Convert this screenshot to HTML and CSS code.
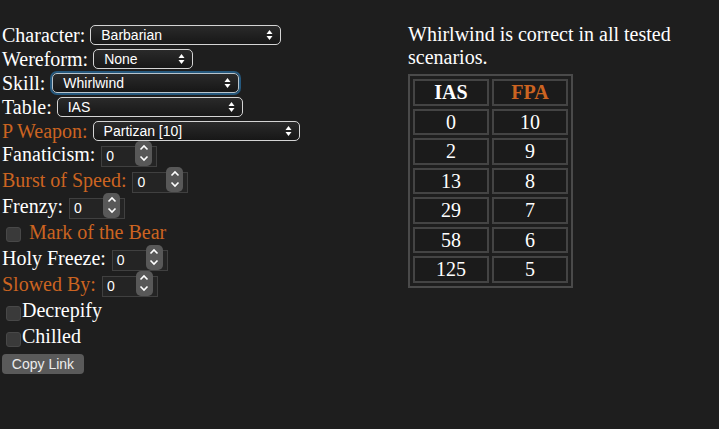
FILE: index.html
```html
<!DOCTYPE html>
<html>
<head>
<meta charset="utf-8">
<link rel="stylesheet" href="styles.css">
</head>
<body>
<div class="page">
  <div class="controls">
    <div class="row row-sel"><span>Character:</span><span class="sel w-char"><span>Barbarian</span><svg class="arr" width="7" height="12" viewBox="0 0 7 12"><polygon points="0.5,5 3.5,1 6.5,5" fill="#fff"/><polygon points="0.5,7 3.5,11 6.5,7" fill="#fff"/></svg></span></div>
    <div class="row row-sel"><span>Wereform:</span><span class="sel w-were"><span>None</span><svg class="arr" width="7" height="12" viewBox="0 0 7 12"><polygon points="0.5,5 3.5,1 6.5,5" fill="#fff"/><polygon points="0.5,7 3.5,11 6.5,7" fill="#fff"/></svg></span></div>
    <div class="row row-sel"><span>Skill:</span><span class="sel w-skill focus"><span>Whirlwind</span><svg class="arr" width="7" height="12" viewBox="0 0 7 12"><polygon points="0.5,5 3.5,1 6.5,5" fill="#fff"/><polygon points="0.5,7 3.5,11 6.5,7" fill="#fff"/></svg></span></div>
    <div class="row row-sel"><span>Table:</span><span class="sel w-table"><span>IAS</span><svg class="arr" width="7" height="12" viewBox="0 0 7 12"><polygon points="0.5,5 3.5,1 6.5,5" fill="#fff"/><polygon points="0.5,7 3.5,11 6.5,7" fill="#fff"/></svg></span></div>
    <div class="row row-sel"><span class="orange">P Weapon:</span><span class="sel w-weap"><span>Partizan [10]</span><svg class="arr" width="7" height="12" viewBox="0 0 7 12"><polygon points="0.5,5 3.5,1 6.5,5" fill="#fff"/><polygon points="0.5,7 3.5,11 6.5,7" fill="#fff"/></svg></span></div>

    <div class="row row-num"><span class="lbl">Fanaticism:</span><span class="num"><span class="num-val">0</span><span class="spin"><svg width="10" height="7" viewBox="0 0 10 7"><polyline points="1.5,5.5 5,2 8.5,5.5" fill="none" stroke="#fff" stroke-width="1.6"/></svg><svg width="10" height="7" viewBox="0 0 10 7"><polyline points="1.5,1.5 5,5 8.5,1.5" fill="none" stroke="#fff" stroke-width="1.6"/></svg></span></span></div>
    <div class="row row-num"><span class="lbl orange">Burst of Speed:</span><span class="num"><span class="num-val">0</span><span class="spin"><svg width="10" height="7" viewBox="0 0 10 7"><polyline points="1.5,5.5 5,2 8.5,5.5" fill="none" stroke="#fff" stroke-width="1.6"/></svg><svg width="10" height="7" viewBox="0 0 10 7"><polyline points="1.5,1.5 5,5 8.5,1.5" fill="none" stroke="#fff" stroke-width="1.6"/></svg></span></span></div>
    <div class="row row-num"><span class="lbl">Frenzy:</span><span class="num"><span class="num-val">0</span><span class="spin"><svg width="10" height="7" viewBox="0 0 10 7"><polyline points="1.5,5.5 5,2 8.5,5.5" fill="none" stroke="#fff" stroke-width="1.6"/></svg><svg width="10" height="7" viewBox="0 0 10 7"><polyline points="1.5,1.5 5,5 8.5,1.5" fill="none" stroke="#fff" stroke-width="1.6"/></svg></span></span></div>
    <div class="row row-chk"><span class="chk chk-wide"></span><span class="lbl orange">Mark of the Bear</span></div>
    <div class="row row-num"><span class="lbl">Holy Freeze:</span><span class="num"><span class="num-val">0</span><span class="spin"><svg width="10" height="7" viewBox="0 0 10 7"><polyline points="1.5,5.5 5,2 8.5,5.5" fill="none" stroke="#fff" stroke-width="1.6"/></svg><svg width="10" height="7" viewBox="0 0 10 7"><polyline points="1.5,1.5 5,5 8.5,1.5" fill="none" stroke="#fff" stroke-width="1.6"/></svg></span></span></div>
    <div class="row row-num"><span class="lbl orange">Slowed By:</span><span class="num"><span class="num-val">0</span><span class="spin"><svg width="10" height="7" viewBox="0 0 10 7"><polyline points="1.5,5.5 5,2 8.5,5.5" fill="none" stroke="#fff" stroke-width="1.6"/></svg><svg width="10" height="7" viewBox="0 0 10 7"><polyline points="1.5,1.5 5,5 8.5,1.5" fill="none" stroke="#fff" stroke-width="1.6"/></svg></span></span></div>
    <div class="row row-chk2"><span class="chk chk-tight"></span><span class="lbl">Decrepify</span></div>
    <div class="row row-chk3"><span class="chk chk-tight"></span><span class="lbl">Chilled</span></div>
    <div class="btn-row"><span class="btn">Copy Link</span></div>
  </div>
  <div class="result">
    <div class="msg">Whirlwind is correct in all tested scenarios.</div>
    <table class="tbl">
      <tr><th>IAS</th><th class="orange">FPA</th></tr>
      <tr><td>0</td><td>10</td></tr>
      <tr><td>2</td><td>9</td></tr>
      <tr><td>13</td><td>8</td></tr>
      <tr><td>29</td><td>7</td></tr>
      <tr><td>58</td><td>6</td></tr>
      <tr><td>125</td><td>5</td></tr>
    </table>
  </div>
</div>
</body>
</html>
```
FILE: styles.css
```css
body {
  margin: 0;
  padding: 23px 0 0 2px;
  background: #1e1e1e;
  color: #fff;
  font-family: "Liberation Serif", "Times New Roman", serif;
  font-size: 20px;
  line-height: 23px;
}
.page {
  display: flex;
}
.controls {
  width: 406px;
  display: flex;
  flex-direction: column;
}
.row {
  display: flex;
  align-items: center;
  gap: 5px;
  white-space: nowrap;
}
.row-sel { height: 24px; }
.row-num { height: 26px; }
.row-chk { height: 26px; }
.row-chk2 { height: 27px; }
.row-chk3 { height: 25px; }
.lbl { margin-bottom: 4px; }
.orange { color: #cc6421; }

.sel {
  box-sizing: border-box;
  height: 20px;
  border: 1px solid #d4d4d4;
  border-radius: 5px;
  background: linear-gradient(#2a2a2a, #171717);
  display: flex;
  align-items: center;
  justify-content: space-between;
  padding: 0 7px 0 10px;
  font: 14px/1 "Liberation Sans", Arial, sans-serif;
  color: #fff;
}
.w-char { width: 191px; }
.w-were { width: 100px; }
.w-skill { width: 187px; margin-left: 2px; }
.w-table { width: 186px; }
.w-weap { width: 207px; }
.focus {
  border-color: #b8c4cc;
  box-shadow: 0 0 0 2px #25587d;
}

.num {
  box-sizing: border-box;
  width: 56px;
  height: 21px;
  margin-left: 1px;
  border: 1px solid #404040;
  background: #242424;
  display: flex;
  justify-content: space-between;
  align-items: flex-end;
  padding: 0 4px 0 4px;
  font: 14px/1 "Liberation Sans", Arial, sans-serif;
  color: #fff;
}
.num-val { align-self: center; }
.spin {
  width: 17px;
  height: 25px;
  border-radius: 5px;
  background: #585858;
  display: flex;
  flex-direction: column;
  align-items: center;
  justify-content: space-around;
  padding: 2px 0;
  box-sizing: border-box;
}

.chk {
  box-sizing: border-box;
  width: 15px;
  height: 15px;
  border-radius: 3px;
  background: #3a3a3a;
  border: 1px solid #484848;
  margin-top: 1px;
}
.chk-wide { margin-left: 4px; margin-right: 3px; }
.chk-tight { margin-left: 4px; margin-right: -4px; }

.btn-row {
  display: flex;
  margin-top: 3px;
}
.btn {
  box-sizing: border-box;
  width: 82px;
  height: 20px;
  border-radius: 4px;
  background: #5a5a5a;
  color: #ececec;
  font: 14px/20px "Liberation Sans", Arial, sans-serif;
  text-align: center;
}

.result {
  flex: 1;
}
.tbl {
  border: 2px solid #4a4a4a;
  border-spacing: 3px;
  margin-top: 5px;
}
.tbl th,
.tbl td {
  border: 2px solid #444;
  width: 72px;
  padding: 0;
  line-height: 22.5px;
  text-align: center;
  font-size: 20px;
  background: #1b1b1b;
}
```
